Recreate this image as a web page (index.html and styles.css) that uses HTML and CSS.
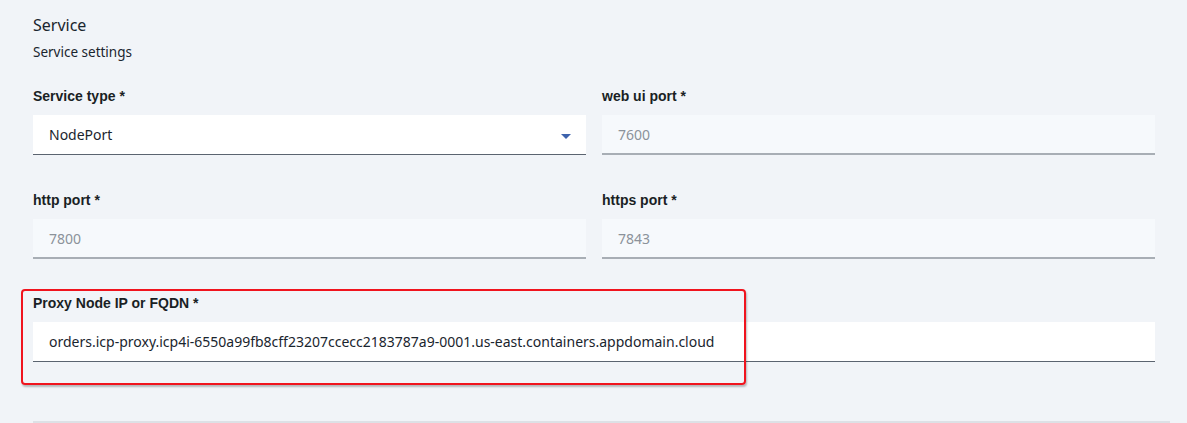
FILE: index.html
```html
<!DOCTYPE html>
<html lang="en">
<head>
<meta charset="utf-8">
<title>Service</title>
<link rel="stylesheet" href="styles.css">
</head>
<body>
<div class="page">
  <div class="section-head">
    <div class="section-title">Service</div>
    <div class="section-sub">Service settings</div>
  </div>
  <div class="form-grid">
    <div class="field">
      <div class="label">Service type *</div>
      <div class="input select">
        <span class="value">NodePort</span>
        <svg class="caret" width="10" height="5" viewBox="0 0 10 5"><path d="M0 0h10L5 5z" fill="#3d63ad"/></svg>
      </div>
    </div>
    <div class="field">
      <div class="label">web ui port *</div>
      <div class="input disabled"><span class="value">7600</span></div>
    </div>
    <div class="field">
      <div class="label">http port *</div>
      <div class="input disabled"><span class="value">7800</span></div>
    </div>
    <div class="field">
      <div class="label">https port *</div>
      <div class="input disabled"><span class="value">7843</span></div>
    </div>
    <div class="field highlighted">
      <div class="label">Proxy Node IP or FQDN *</div>
      <div class="input text"><span class="value">orders.icp-proxy.icp4i-6550a99fb8cff23207ccecc2183787a9-0001.us-east.containers.appdomain.cloud</span></div>
      <div class="annotation"></div>
    </div>
  </div>
  <div class="divider"></div>
</div>
</body>
</html>
```
FILE: styles.css
```css
html, body {
  margin: 0;
  padding: 0;
  background: #f1f4f8;
  height: 100%;
  overflow: hidden;
}
.page {
  padding: 15px 0 0 33px;
  width: 1122px;
  font-family: "Noto Sans", "Liberation Sans", sans-serif;
  color: #1a252e;
}
.section-title {
  font-size: 16px;
  line-height: 20px;
  height: 20px;
}
.section-sub {
  font-size: 13.5px;
  line-height: 18px;
  margin-top: 8px;
}
.form-grid {
  display: grid;
  grid-template-columns: 553px 553px;
  column-gap: 16px;
  row-gap: 36px;
  margin-top: 26px;
}
.field {
  position: relative;
  display: flex;
  flex-direction: column;
}
.field.highlighted {
  grid-column: 1 / span 2;
  margin-top: -1px;
}
.label {
  font-family: "Liberation Sans", Arial, sans-serif;
  font-weight: bold;
  font-size: 14px;
  line-height: 18px;
  color: #1a1f24;
  margin-bottom: 10px;
}
.input {
  box-sizing: border-box;
  height: 40px;
  display: flex;
  align-items: center;
  padding: 0 16px;
  font-size: 14px;
}
.select {
  background: #ffffff;
  border-bottom: 1px solid #5b6470;
  justify-content: space-between;
  color: #1a252e;
  padding-right: 15px;
}
.caret {
  margin-top: 3px;
}
.disabled {
  background: #f6f9fc;
  border-bottom: 2px solid #a8aeb5;
  color: #8b929a;
}
.text {
  background: #ffffff;
  border-bottom: 1px solid #5b6470;
  color: #1a252e;
}
.field.highlighted .input {
  width: 1122px;
}
.annotation {
  position: absolute;
  left: -12px;
  top: -5px;
  width: 725px;
  height: 96px;
  box-sizing: border-box;
  border: 2px solid #f0141e;
  border-radius: 4px;
  box-shadow: 1px 2px 2px rgba(0,0,0,0.25);
  pointer-events: none;
}
.divider {
  margin-top: 59px;
  width: 1137px;
  height: 2px;
  background: #dde1e6;
}
```
